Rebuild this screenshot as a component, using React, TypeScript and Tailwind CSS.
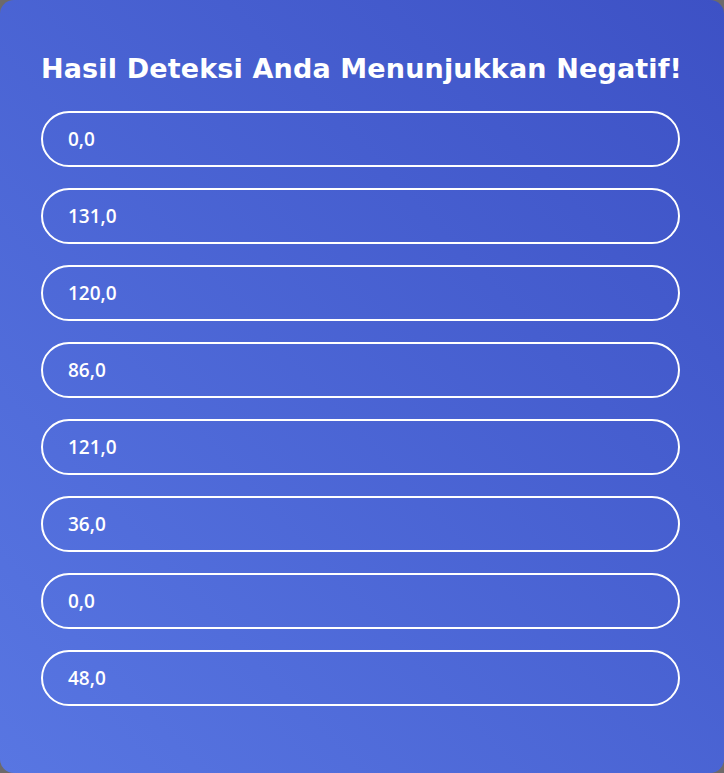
import React from "react";

const values = ["0,0", "131,0", "120,0", "86,0", "121,0", "36,0", "0,0", "48,0"];

export default function App() {
  return (
    <div className="w-[724px] h-[773px] bg-[#6d6a6a] overflow-hidden">
      <div
        className="w-[724px] h-[773px] rounded-[14px] bg-gradient-to-tr from-[#5876e2] to-[#3d51c5] pl-[41px] pr-[44px] pt-[50px]"
        style={{ fontFamily: '"Open Sans", "Liberation Sans", sans-serif' }}
      >
        <h1
          className="text-white text-[27px] font-bold text-center leading-[37px] tracking-[0.15px] mb-[24px] whitespace-nowrap"
          style={{ fontFamily: '"DejaVu Sans", "Open Sans", sans-serif' }}
        >
          Hasil Deteksi Anda Menunjukkan Negatif!
        </h1>
        <div className="flex flex-col gap-[21px]">
          {values.map((v, i) => (
            <div
              key={i}
              className="h-[56px] rounded-full border-2 border-white flex items-center pl-[25px] text-white text-[19px] font-semibold"
            >
              {v}
            </div>
          ))}
        </div>
      </div>
    </div>
  );
}
